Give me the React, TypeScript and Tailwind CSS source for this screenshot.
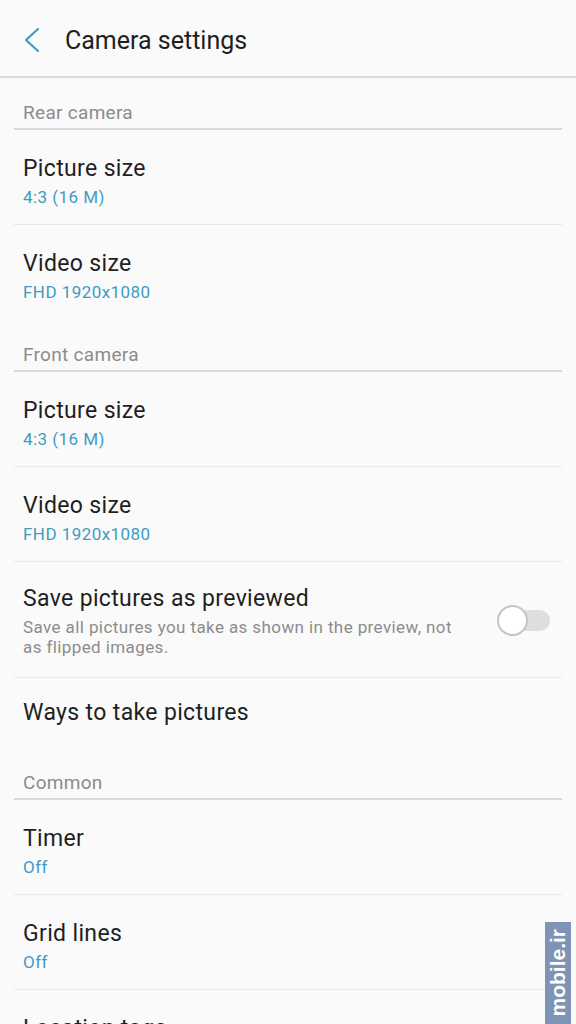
const font = { fontFamily: 'Roboto, "Noto Sans", sans-serif' };

type Item = { title: string; sub?: string; last?: boolean };

function Category({ label }: { label: string }) {
  return (
    <div className="mx-[14px] h-[52px] border-b-2 border-[#d9d9d9] pl-[9px] pt-[23px]">
      <div className="text-[19px] leading-[24px] tracking-[0.3px] text-[#8c8c8c]">{label}</div>
    </div>
  );
}

function Row({ title, sub, last }: Item) {
  return (
    <div className={`mx-[14px] h-[95px] px-[9px] pt-[24px] ${last ? '' : 'border-b border-[#e8e8e8]'}`}>
      <div className="text-[23px] leading-[30px] tracking-[0.35px] text-[#1f1f1f]">{title}</div>
      {sub && <div className="text-[17px] leading-[26px] tracking-[0.45px] text-[#3f9bc1]">{sub}</div>}
    </div>
  );
}

function Toggle() {
  return (
    <div className="relative h-[31px] w-[53px] shrink-0">
      <div className="absolute left-[12px] right-0 top-[5px] h-[21px] rounded-full bg-[#dedede]" />
      <div className="absolute left-0 top-0 h-[31px] w-[31px] rounded-full border-2 border-[#c4c4c4] bg-white" />
    </div>
  );
}

export default function App() {
  return (
    <div className="relative h-[1024px] w-[576px] overflow-hidden bg-[#fafafa]" style={font}>
      {/* Top bar */}
      <div className="flex h-[78px] items-center border-b-2 border-[#dcdcdc] pl-[22px] pt-[5px]">
        <svg width="20" height="26" viewBox="0 0 20 26" className="mb-[2px]">
          <polyline points="16,2 4,13 16,24" fill="none" stroke="#3f9bc1" strokeWidth="2.2" strokeLinecap="round" strokeLinejoin="round" />
        </svg>
        <div className="ml-[23px] text-[25px] leading-[32px] text-[#1f1f1f]">Camera settings</div>
      </div>

      <Category label="Rear camera" />
      <Row title="Picture size" sub="4:3 (16 M)" />
      <Row title="Video size" sub="FHD 1920x1080" last />

      <Category label="Front camera" />
      <Row title="Picture size" sub="4:3 (16 M)" />
      <Row title="Video size" sub="FHD 1920x1080" />

      <div className="mx-[14px] flex h-[116px] items-start border-b border-[#e8e8e8] px-[9px] pt-[22px]">
        <div className="w-[445px]">
          <div className="text-[23px] leading-[30px] tracking-[0.35px] text-[#1f1f1f]">Save pictures as previewed</div>
          <div className="mt-[3px] text-[17px] leading-[20px] tracking-[0.4px] text-[#8c8c8c]">
            Save all pictures you take as shown in the preview, not as flipped images.
          </div>
        </div>
        <div className="ml-auto mt-[21px] mr-[3px]">
          <Toggle />
        </div>
      </div>

      <div className="mx-[14px] flex h-[70px] items-center px-[9px]">
        <div className="text-[23px] leading-[30px] tracking-[0.35px] text-[#1f1f1f]">Ways to take pictures</div>
      </div>

      <Category label="Common" />
      <Row title="Timer" sub="Off" />
      <Row title="Grid lines" sub="Off" />
      <Row title="Location tags" sub="Off" />

      {/* watermark */}
      <div className="absolute left-[545px] top-[922px] flex h-[102px] w-[26px] items-center justify-center bg-[#7f93b6]">
        <span
          className="rotate-180 text-[21px] font-bold leading-[26px] text-white [writing-mode:vertical-rl]"
          style={{ fontFamily: '"Liberation Sans", Arial, sans-serif' }}
        >
          mobile.ir
        </span>
      </div>
    </div>
  );
}
